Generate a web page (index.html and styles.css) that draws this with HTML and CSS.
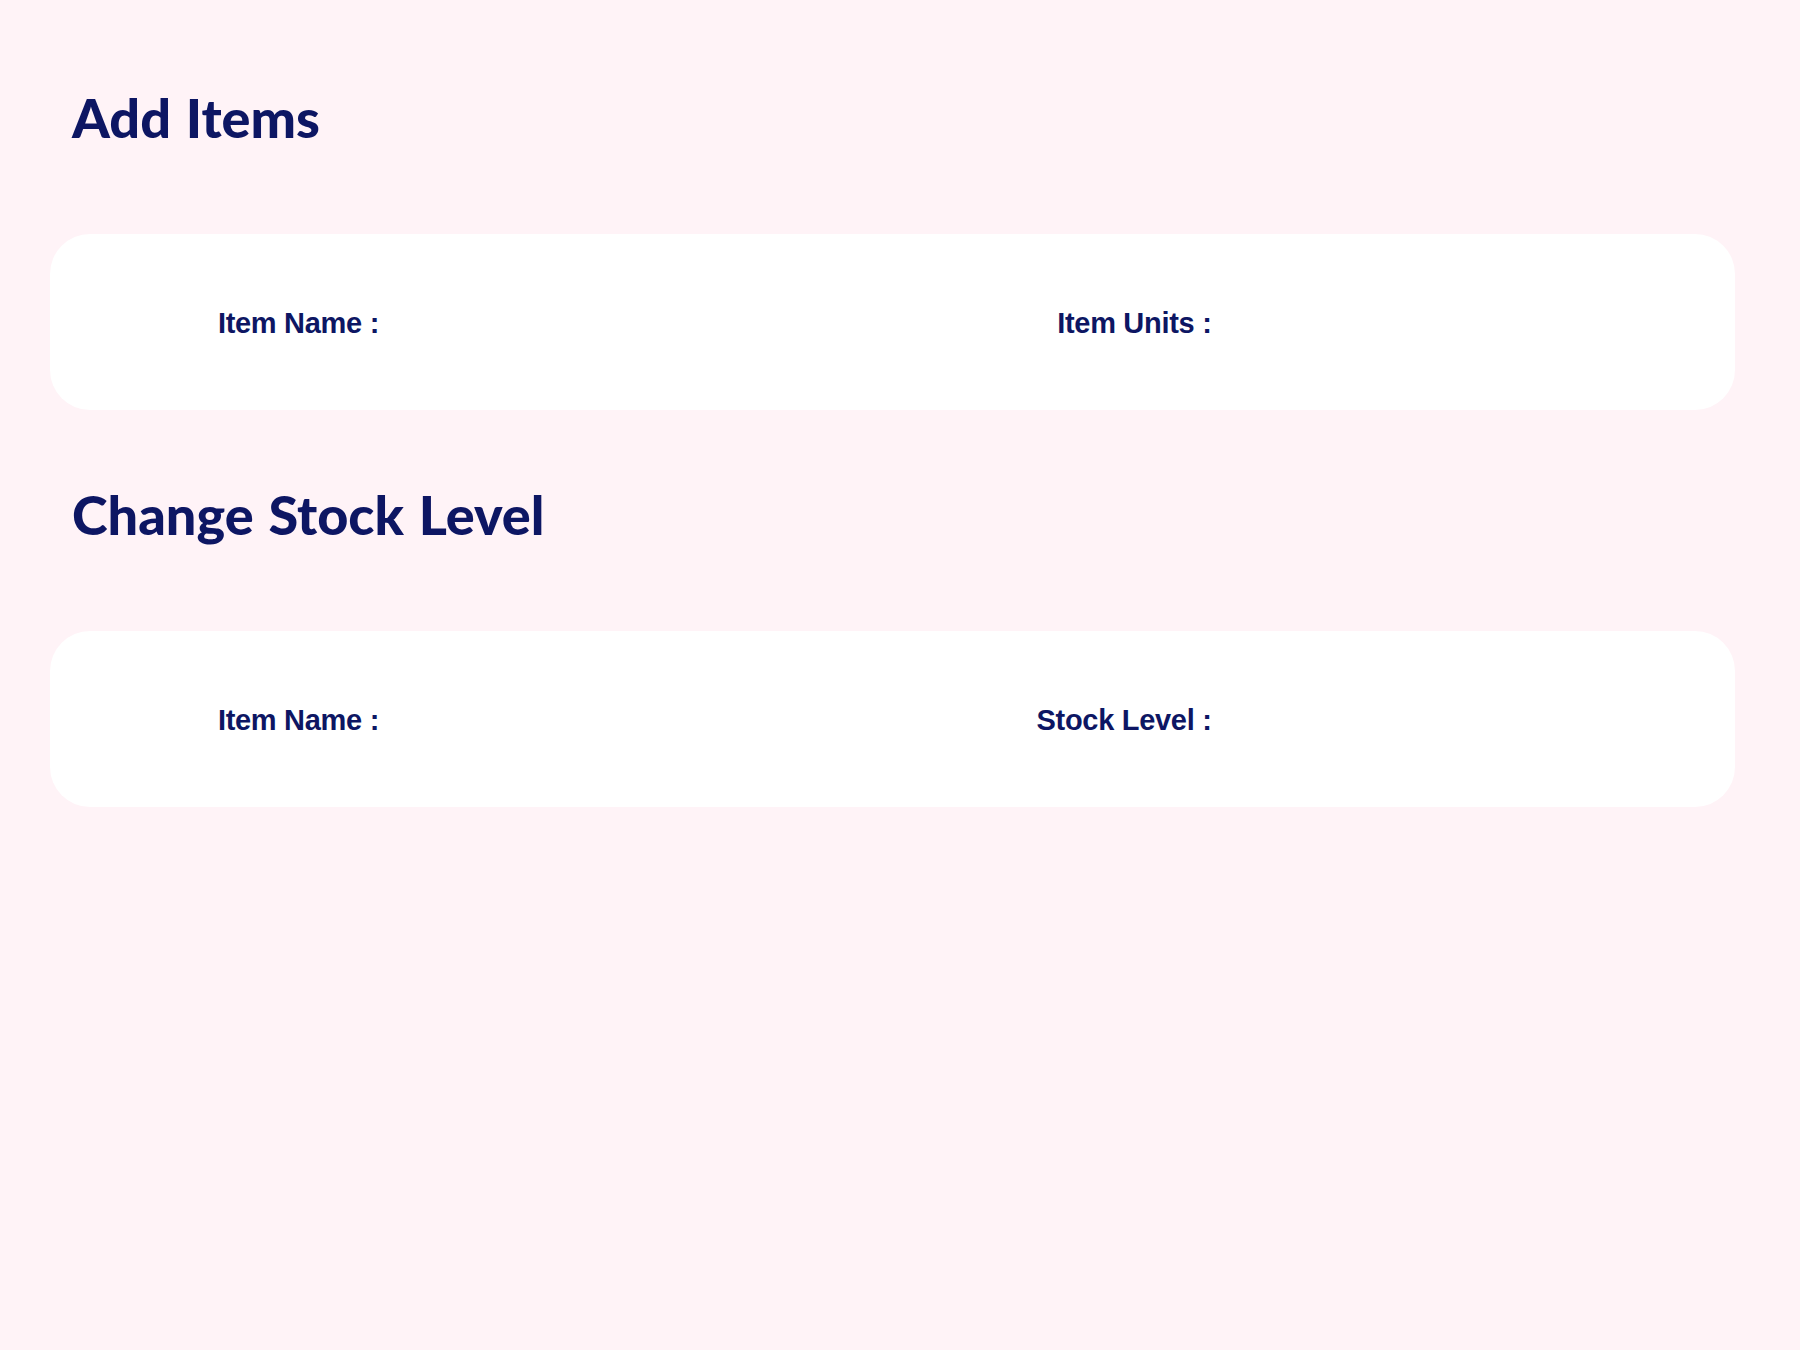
FILE: index.html
```html
<!DOCTYPE html>
<html lang="en">
<head>
<meta charset="utf-8">
<title>Inventory</title>
<link rel="stylesheet" href="styles.css">
</head>
<body>
<main class="page">
  <h1 class="title title-first">Add Items</h1>
  <section class="card">
    <div class="field">
      <label class="label">Item Name :</label>
      <div class="input"></div>
    </div>
    <div class="field">
      <label class="label">Item Units :</label>
      <div class="input"></div>
    </div>
  </section>
  <h1 class="title title-second">Change Stock Level</h1>
  <section class="card">
    <div class="field">
      <label class="label">Item Name :</label>
      <div class="input"></div>
    </div>
    <div class="field">
      <label class="label">Stock Level :</label>
      <div class="input"></div>
    </div>
  </section>
</main>
</body>
</html>
```

FILE: styles.css
```css
html, body {
  margin: 0;
  padding: 0;
}
body {
  background: #fff3f7;
  color: #0d1663;
  min-height: 1350px;
}
.page {
  width: 1685px;
  padding-left: 50px;
  display: flex;
  flex-direction: column;
}
.title {
  font-family: "Lato", "Noto Sans", sans-serif;
  font-weight: 900;
  font-size: 54px;
  line-height: 54px;
  margin: 0;
  padding-left: 22px;
  letter-spacing: 0;
  word-spacing: 2px;
}
.title-first {
  margin-top: 91px;
  margin-bottom: 89px;
}
.title-second {
  margin-top: 78px;
  margin-bottom: 89px;
}
.card {
  background: #ffffff;
  border-radius: 40px;
  height: 176px;
  padding: 0 10px;
  display: grid;
  grid-template-columns: 1fr 1fr;
  align-items: center;
}
.field {
  display: flex;
  align-items: center;
  padding-top: 2px;
}
.label {
  width: 319px;
  text-align: right;
  font-family: "Liberation Sans", Arial, sans-serif;
  font-weight: 700;
  font-size: 29px;
  letter-spacing: -0.3px;
}
.input {
  flex: 1;
}
```
